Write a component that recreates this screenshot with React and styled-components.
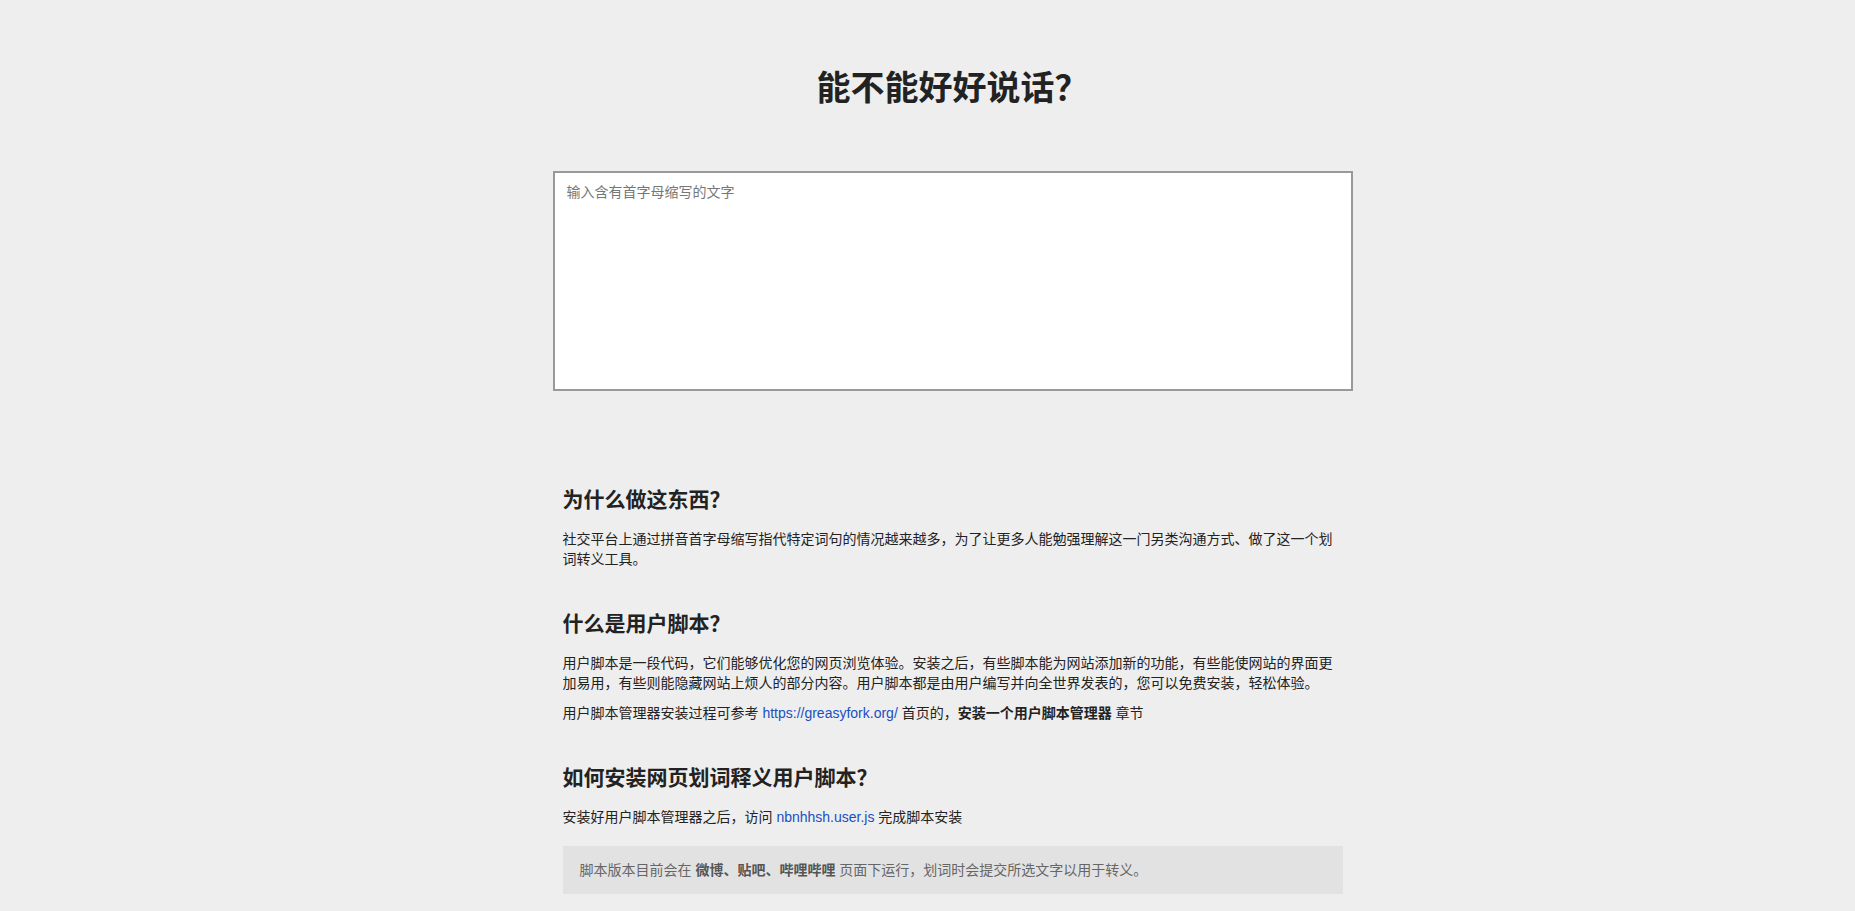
import React from "react";
import styled, { createGlobalStyle } from "styled-components";

const GlobalStyle = createGlobalStyle`
  html, body {
    margin: 0;
    padding: 0;
    background: #eeeeee;
  }
  body {
    font-family: "Liberation Sans", Arial, "Noto Sans CJK SC", sans-serif;
    color: #222;
  }
`;

const Page = styled.div`
  min-height: 100vh;
  padding: 66px 0 40px 50px;
  box-sizing: border-box;
`;

const Title = styled.h1`
  margin: 0;
  text-align: center;
  font-family: "Noto Sans CJK SC", sans-serif;
  font-size: 34px;
  line-height: 40px;
  font-weight: 700;
  color: #222;
`;

const Input = styled.textarea`
  display: block;
  width: 800px;
  height: 220px;
  margin: 65px auto 0;
  box-sizing: border-box;
  padding: 9px 12px;
  border: 2px solid #999;
  border-radius: 0;
  background: #fff;
  resize: none;
  outline: none;
  font-family: "Liberation Sans", Arial, "Noto Sans CJK SC", sans-serif;
  font-size: 14px;
  line-height: 20px;
  color: #222;

  &::placeholder {
    color: #777;
  }
`;

const Article = styled.div`
  width: 780px;
  margin: 92px auto 0;
  display: flex;
  flex-direction: column;
  gap: 38px;
`;

const Section = styled.section`
  display: flex;
  flex-direction: column;
  gap: 10px;
`;

const Heading = styled.h2`
  margin: 0 0 6px;
  font-family: "Noto Sans CJK SC", sans-serif;
  font-size: 21px;
  line-height: 30px;
  font-weight: 700;
  color: #222;
`;

const Text = styled.p`
  margin: 0;
  font-size: 14px;
  line-height: 20px;
  color: #222;

  b {
    font-weight: 700;
  }
`;

const Link = styled.a`
  color: #1a4fc4;
  text-decoration: none;
`;

const Note = styled.div`
  margin-top: 9px;
  padding: 14px 17px;
  background: #e2e2e2;
  font-size: 14px;
  line-height: 20px;
  color: #666;

  b {
    color: #555;
    font-weight: 700;
  }
`;

export default function App() {
  return (
    <>
      <GlobalStyle />
      <Page>
        <Title>能不能好好说话？</Title>
        <Input placeholder="输入含有首字母缩写的文字" />
        <Article>
          <Section>
            <Heading>为什么做这东西？</Heading>
            <Text>
              社交平台上通过拼音首字母缩写指代特定词句的情况越来越多，为了让更多人能勉强理解这一门另类沟通方式、做了这一个划词转义工具。
            </Text>
          </Section>
          <Section>
            <Heading>什么是用户脚本？</Heading>
            <Text>
              用户脚本是一段代码，它们能够优化您的网页浏览体验。安装之后，有些脚本能为网站添加新的功能，有些能使网站的界面更加易用，有些则能隐藏网站上烦人的部分内容。用户脚本都是由用户编写并向全世界发表的，您可以免费安装，轻松体验。
            </Text>
            <Text>
              用户脚本管理器安装过程可参考{" "}
              <Link href="#">https://greasyfork.org/</Link> 首页的，
              <b>安装一个用户脚本管理器</b> 章节
            </Text>
          </Section>
          <Section>
            <Heading>如何安装网页划词释义用户脚本？</Heading>
            <Text>
              安装好用户脚本管理器之后，访问 <Link href="#">nbnhhsh.user.js</Link>{" "}
              完成脚本安装
            </Text>
            <Note>
              脚本版本目前会在 <b>微博、贴吧、哔哩哔哩</b>{" "}
              页面下运行，划词时会提交所选文字以用于转义。
            </Note>
          </Section>
        </Article>
      </Page>
    </>
  );
}
